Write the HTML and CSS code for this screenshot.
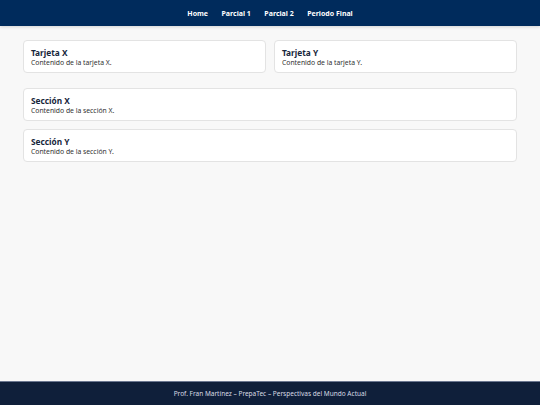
FILE: index.html
```html
<!DOCTYPE html>
<html lang="es">
<head>
<meta charset="utf-8">
<title>Perspectivas del Mundo Actual</title>
<link rel="stylesheet" href="styles.css">
</head>
<body>
<div class="page">
  <header class="topbar">
    <nav class="nav">
      <a href="#" class="nav-link">Home</a>
      <a href="#" class="nav-link">Parcial 1</a>
      <a href="#" class="nav-link">Parcial 2</a>
      <a href="#" class="nav-link">Periodo Final</a>
    </nav>
  </header>
  <main class="content">
    <div class="card-row">
      <div class="card">
        <h2 class="card-title">Tarjeta X</h2>
        <p class="card-text">Contenido de la tarjeta X.</p>
      </div>
      <div class="card">
        <h2 class="card-title">Tarjeta Y</h2>
        <p class="card-text">Contenido de la tarjeta Y.</p>
      </div>
    </div>
    <div class="sections">
      <section class="card">
        <h2 class="card-title">Sección X</h2>
        <p class="card-text">Contenido de la sección X.</p>
      </section>
      <section class="card">
        <h2 class="card-title">Sección Y</h2>
        <p class="card-text">Contenido de la sección Y.</p>
      </section>
    </div>
  </main>
  <footer class="footer">
    <p class="footer-text">Prof. Fran Martínez – PrepaTec – Perspectivas del Mundo Actual</p>
  </footer>
</div>
</body>
</html>
```
FILE: styles.css
```css
* { box-sizing: border-box; }
html, body { margin: 0; padding: 0; height: 100%; }
body {
  font-family: "Noto Sans", "Open Sans", sans-serif;
  background: #f8f8f8;
  color: #333;
}
.page {
  min-height: 100%;
  display: flex;
  flex-direction: column;
}
.topbar {
  background: #002b5c;
  height: 26px;
  display: flex;
  align-items: center;
  justify-content: center;
  box-shadow: 0 1px 3px rgba(0,0,0,0.15);
}
.nav {
  display: flex;
  gap: 13.5px;
}
.nav-link {
  color: #fff;
  text-decoration: none;
  font-weight: 700;
  font-size: 7px;
}
.content {
  flex: 1;
  padding: 14px 23px;
  display: flex;
  flex-direction: column;
  gap: 15px;
}
.card-row {
  display: grid;
  grid-template-columns: 1fr 1fr;
  gap: 8px;
}
.sections {
  display: flex;
  flex-direction: column;
  gap: 8px;
}
.card {
  background: #fff;
  border: 1px solid #e3e3e3;
  border-radius: 4px;
  padding: 6px 7px 0;
  height: 33px;
  display: flex;
  flex-direction: column;
}
.card-title {
  margin: 0;
  font-size: 8.3px;
  font-weight: 700;
  line-height: 11px;
  color: #17263b;
}
.card-text {
  margin: 0;
  font-size: 6.8px;
  line-height: 9px;
  color: #2f2f2f;
}
.footer {
  background: #0f1f3a;
  height: 24px;
  display: flex;
  align-items: center;
  justify-content: center;
  border-top: 1px solid #6b7790;
}
.footer-text {
  margin: 0;
  font-size: 6.5px;
  color: #d7dbe3;
}
```
